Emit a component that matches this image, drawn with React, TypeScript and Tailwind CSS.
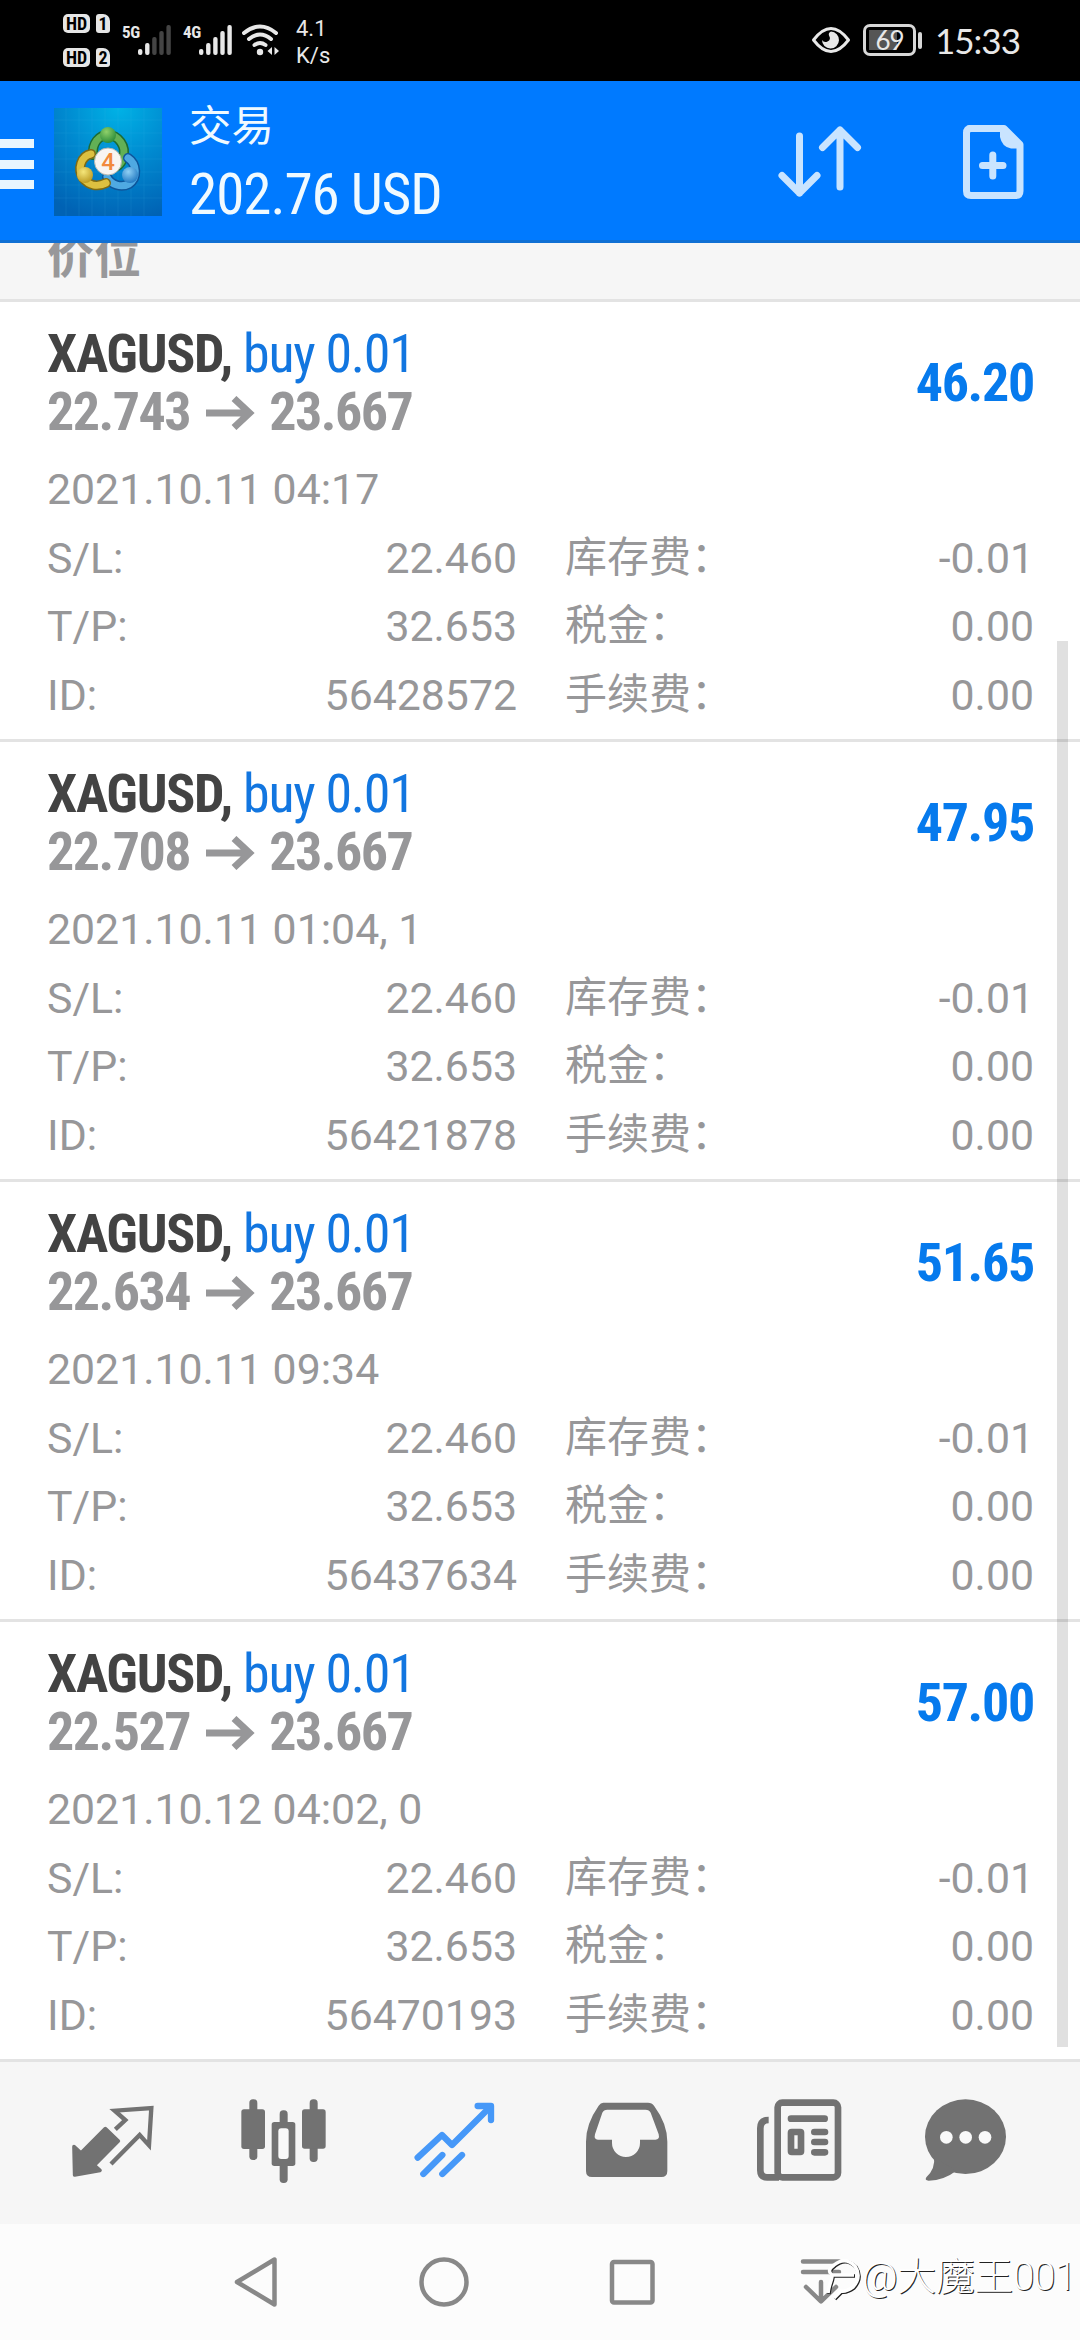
import React from 'react';

interface Position {
  id: string;
  symbol: string;
  side: string;
  open: string;
  current: string;
  profit: string;
  time: string;
  sl: string;
  tp: string;
  swap: string;
}

const positions: Position[] = [
  { id: '56428572', symbol: 'XAGUSD', side: 'buy 0.01', open: '22.743', current: '23.667', profit: '46.20', time: '2021.10.11 04:17', sl: '22.460', tp: '32.653', swap: '-0.01' },
  { id: '56421878', symbol: 'XAGUSD', side: 'buy 0.01', open: '22.708', current: '23.667', profit: '47.95', time: '2021.10.11 01:04, 1', sl: '22.460', tp: '32.653', swap: '-0.01' },
  { id: '56437634', symbol: 'XAGUSD', side: 'buy 0.01', open: '22.634', current: '23.667', profit: '51.65', time: '2021.10.11 09:34', sl: '22.460', tp: '32.653', swap: '-0.01' },
  { id: '56470193', symbol: 'XAGUSD', side: 'buy 0.01', open: '22.527', current: '23.667', profit: '57.00', time: '2021.10.12 04:02, 0', sl: '22.460', tp: '32.653', swap: '-0.01' },
];

function SimBadge({ slot }: { slot: string }) {
  return (
    <div className="flex gap-[6px] h-[19px] text-black font-bold text-[18px] leading-[20px] [font-stretch:75%]">
      <span className="w-[27px] rounded-[5px] bg-[#e6e6e6] text-center">HD</span>
      <span className="w-[14px] rounded-[3px] rounded-tr-[7px] bg-[#e6e6e6] text-center">{slot}</span>
    </div>
  );
}

function Signal({ label, level }: { label: string; level: number }) {
  return (
    <div className="flex items-end h-[30px]">
      <span className="self-start w-[16px] text-[17px] leading-[14px] font-bold tracking-[-0.3px] [font-stretch:75%]">{label}</span>
      <svg width="34" height="30" viewBox="0 0 34 30">
        {[6, 12, 18, 24, 30].map((h, i) => (
          <rect key={h} x={i * 7.1} y={30 - h} width="4.4" height={h} rx="2" fill={i < level ? '#e8e8e8' : '#444'} />
        ))}
      </svg>
    </div>
  );
}

function StatusBar() {
  return (
    <div className="h-[81px] bg-black text-[#e8e8e8] flex items-start">
      <div className="flex flex-col gap-[15px] pl-[63px] pt-[14px]">
        <SimBadge slot="1" />
        <SimBadge slot="2" />
      </div>
      <div className="pl-[12px] pt-[25px]">
        <Signal label="5G" level={2} />
      </div>
      <div className="pl-[11px] pt-[25px]">
        <Signal label="4G" level={5} />
      </div>
      <svg className="ml-[9px] mt-[24px]" width="38" height="32" viewBox="0 0 38 32" fill="none" stroke="#e8e8e8" strokeWidth="4" strokeLinecap="round">
        <path d="M2 9Q18 -4 34 9" />
        <path d="M7 15Q18 6 29 15" />
        <path d="M12.500 21Q18 17 23.500 21" />
        <circle cx="18" cy="28" r="3.200" fill="#e8e8e8" stroke="none" />
        <path d="M30 23V31L25.500 27ZM32.500 23V31L37 27Z" fill="#e8e8e8" stroke="none" />
      </svg>
      <div className="ml-[16px] pt-[15px] text-[22px] leading-[27px]">
        <div>4.1</div>
        <div>K/s</div>
      </div>
      <div className="ml-auto flex items-center pt-[21px] pr-[61px]">
        <svg width="40" height="28" viewBox="0 0 40 28">
          <path d="M2.500 14Q20 -9 37.500 14Q20 37 2.500 14Z" fill="none" stroke="#e8e8e8" strokeWidth="3" strokeLinejoin="round" />
          <path d="M20 5.500A8.500 8.500 0 1 1 11 14Q13 17 16.500 15.500Q20.500 13.500 18 9.500Q17 7 20 5.500Z" fill="#e8e8e8" />
        </svg>
        <div className="ml-[12px] w-[53px] h-[32px] rounded-[7px] border-[3px] border-[#d8d8d8] p-[3px]">
          <div className="w-[41px] h-[20px] bg-[linear-gradient(90deg,#555_68%,#000_68%)] text-center font-[Lato] text-[26px] leading-[20px] tracking-[-1px]">69</div>
        </div>
        <div className="ml-[2px] w-[4px] h-[17px] rounded-[2px] bg-[#d8d8d8]" />
        <div className="ml-[13px] w-[84px] font-[Lato] text-[35px] leading-[38px] tracking-[-1px]">15:33</div>
      </div>
    </div>
  );
}

function AppLogo() {
  return (
    <svg width="108" height="108" viewBox="0 0 108 108">
      <defs>
        <radialGradient id="sky" cx="60%" cy="0%" r="105%">
          <stop offset="0" stopColor="#00b2e6" />
          <stop offset="0.5" stopColor="#0088cf" />
          <stop offset="1" stopColor="#0062b4" />
        </radialGradient>
        <radialGradient id="green" cx="40%" cy="30%" r="80%">
          <stop offset="0" stopColor="#8fd06a" />
          <stop offset="1" stopColor="#1f8434" />
        </radialGradient>
        <radialGradient id="yellow" cx="40%" cy="30%" r="80%">
          <stop offset="0" stopColor="#f5e67a" />
          <stop offset="1" stopColor="#b59218" />
        </radialGradient>
        <radialGradient id="blue" cx="40%" cy="30%" r="80%">
          <stop offset="0" stopColor="#8fd0f5" />
          <stop offset="1" stopColor="#1670bd" />
        </radialGradient>
      </defs>
      <rect width="108" height="108" fill="url(#sky)" />
      <path d="M12 0V108M25 0V108M38 0V108M51 0V108M64 0V108M77 0V108M90 0V108M0 12H108M0 25H108M0 38H108M0 51H108M0 64H108M0 77H108M0 90H108" stroke="#3fb4ec" strokeOpacity="0.12" />
      <g fill="none" strokeLinecap="round">
        <path d="M39 47C38 35 45 27 54 27C64 27 73 38 69 50C67 57 62 60 58 59" stroke="#1c6b33" strokeWidth="10" />
        <path d="M39 47C38 35 45 27 54 27C64 27 73 38 69 50C67 57 62 60 58 59" stroke="#62b055" strokeWidth="7" />
        <path d="M53 69C57 77 67 80 75 76C84 70 83 56 74 50" stroke="#0d559b" strokeWidth="10" />
        <path d="M53 69C57 77 67 80 75 76C84 70 83 56 74 50" stroke="#4fa9e2" strokeWidth="7" />
        <path d="M37 46C27 48 23 61 29 70C35 78 44 79 52 75" stroke="#7d6a14" strokeWidth="10" />
        <path d="M37 46C27 48 23 61 29 70C35 78 44 79 52 75" stroke="#dcc040" strokeWidth="7" />
      </g>
      <circle cx="54" cy="27" r="8" fill="url(#green)" />
      <circle cx="31" cy="67" r="8" fill="url(#yellow)" />
      <circle cx="76" cy="67" r="8" fill="url(#blue)" />
      <circle cx="54" cy="53.500" r="13.500" fill="#f8f5f2" stroke="#b9b9b0" />
      <text x="54" y="62" textAnchor="middle" fontFamily="Roboto" fontSize="24" fontWeight="500" fill="#f28a3c">4</text>
    </svg>
  );
}

function Header() {
  return (
    <div className="h-[162px] bg-[#007aff] shadow-[inset_0_-3px_0_#1070d4] flex items-center">
      <div className="mt-[4px] w-[34px] h-[50px] flex flex-col justify-between">
        <div className="h-[9px] bg-[#e8f6ff]" />
        <div className="h-[9px] bg-[#e8f6ff]" />
        <div className="h-[9px] bg-[#e8f6ff]" />
      </div>
      <div className="ml-[20px]">
        <AppLogo />
      </div>
      <div className="ml-[27px] pt-[4px] text-[#f0faff]">
        <div className="text-[42.5px] leading-[62px]">交易</div>
        <div className="text-[57px] leading-[74px] tracking-[-1px] [font-stretch:75%]">202.76 USD</div>
      </div>
      <svg className="ml-auto" width="90" height="80" viewBox="0 0 90 80" fill="none" stroke="#c9e4ff" strokeWidth="7" strokeLinecap="round" strokeLinejoin="round">
        <path d="M25.500 14V71M8 53.500L25.500 71L43 53.500" />
        <path d="M66 65V8M48.500 25.500L66 8L83.500 25.500" />
      </svg>
      <svg className="ml-[97px] mr-[49px] mt-[2px]" width="70" height="80" viewBox="0 0 70 80" fill="none" stroke="#c9e4ff" strokeWidth="7" strokeLinecap="round" strokeLinejoin="round">
        <path d="M8 5.500H43L59 21.500V68Q59 72.500 54.500 72.500H10Q5.500 72.500 5.500 68V10Q5.500 5.500 10 5.500Z" />
        <path d="M39 5V14Q41 24 50 25.500H60V20L43 4Z" fill="#c9e4ff" stroke="none" />
        <path d="M21.500 42.500H42M31.800 32V53" />
      </svg>
    </div>
  );
}

function Field({ label, value }: { label: string; value: string }) {
  return (
    <div className="flex justify-between">
      <span>{label}</span>
      <span>{value}</span>
    </div>
  );
}

function FeeField({ label, value }: { label: string; value: string }) {
  return (
    <div className="flex justify-between">
      <span className="text-[42px] pl-px">{label}</span>
      <span>{value}</span>
    </div>
  );
}

function PositionRow({ position }: { position: Position }) {
  return (
    <div className="h-[440px] bg-white border-b-[3px] border-[#e3e3e3] pt-[23px] pl-[47px] pr-[46px] text-[#979799]">
      <div className="flex items-center justify-between text-[54px] leading-[58px] font-bold tracking-[-1.3px] [font-stretch:75%]">
        <div>
          <div className="text-[#434343]">
            {position.symbol}, <span className="font-normal text-[#1276e0]">{position.side}</span>
          </div>
          <div className="flex items-center tracking-[-1.5px]">
            {position.open}
            <svg className="ml-[16px] mr-[14px] mt-[2px]" width="49" height="34" viewBox="0 0 49 34" fill="none" stroke="#979799" strokeWidth="7">
              <path d="M0 17H44M28 2.500L43.500 17L28 31.500" />
            </svg>
            {position.current}
          </div>
        </div>
        <div className="text-[#067aed]">{position.profit}</div>
      </div>
      <div className="mt-[14px] text-[42.8px] leading-[68.5px]">
        <div>{position.time}</div>
        <div className="grid grid-cols-2 gap-x-[47px]">
          <Field label="S/L:" value={position.sl} />
          <FeeField label="库存费：" value={position.swap} />
          <Field label="T/P:" value={position.tp} />
          <FeeField label="税金：" value="0.00" />
          <Field label="ID:" value={position.id} />
          <FeeField label="手续费：" value="0.00" />
        </div>
      </div>
    </div>
  );
}

function QuotesIcon() {
  return (
    <svg width="96" height="96" viewBox="0 0 288 288" fill="none" stroke="#727272" strokeLinejoin="round">
      <path d="M27 155L48 174L121 101L160 138L88 211L105 226L29 240Z" fill="#727272" strokeWidth="11" />
      <path d="M151 103L181 75L149 47L259 39L252 151L224 120L138 207" strokeWidth="13" strokeLinejoin="miter" />
    </svg>
  );
}

function ChartIcon() {
  return (
    <svg width="96" height="96" viewBox="0 0 288 288" fill="#727272">
      <rect x="40" y="13" width="24" height="182" rx="11" />
      <rect x="16" y="43" width="71" height="119" rx="8" />
      <rect x="221" y="13" width="24" height="188" rx="11" />
      <rect x="198" y="43" width="71" height="118" rx="8" />
      <rect x="131" y="46" width="24" height="218" rx="11" />
      <rect x="107" y="81" width="71" height="132" rx="8" />
      <rect x="127" y="100" width="31" height="92" rx="9" fill="#f9f9f9" />
    </svg>
  );
}

function TradeIcon() {
  return (
    <svg width="96" height="96" viewBox="0 0 288 288" fill="none" stroke="#4698f8" strokeWidth="19" strokeLinecap="round" strokeLinejoin="round">
      <path d="M32 188L105 120L135 150L250 35" />
      <path d="M212 33H252V75" />
      <path d="M49 237L106 180M106 237L165 180" />
    </svg>
  );
}

function HistoryIcon() {
  return (
    <svg width="96" height="96" viewBox="0 0 288 288" fill="#727272">
      <path fillRule="evenodd" d="M76 23H210Q222 23 228 32Q268 86 268 140V228Q268 246 250 246H42Q24 246 24 228V140Q24 86 62 32Q68 23 76 23ZM88 44Q77 44 73 53L51 118Q47 134 60 134H102V144A42 42 0 0 0 186 144V134H232Q246 134 242 118L218 53Q214 44 202 44Z" />
    </svg>
  );
}

function NewsIcon() {
  return (
    <svg width="96" height="96" viewBox="0 0 288 288" fill="none" stroke="#727272" strokeWidth="20" strokeLinecap="round">
      <rect x="86" y="23" width="181" height="224" rx="14" />
      <path d="M59 75Q34 75 34 100V226Q34 247 54 247H90" strokeLinecap="butt" />
      <path d="M126 71H227M196 111H228M196 141H228M196 172H228" />
      <rect x="126" y="111" width="30" height="60" rx="2" />
    </svg>
  );
}

function MessagesIcon() {
  return (
    <svg width="96" height="96" viewBox="0 0 288 288" fill="#727272">
      <ellipse cx="136.500" cy="125" rx="121.500" ry="112" />
      <path d="M42 185Q47 220 19 247Q13 257 26 257Q72 256 108 228Z" />
      <g fill="#f9f9f9">
        <circle cx="79" cy="127" r="19" />
        <circle cx="137" cy="127" r="19" />
        <circle cx="195" cy="127" r="19" />
      </g>
    </svg>
  );
}

const tabs = [QuotesIcon, ChartIcon, TradeIcon, HistoryIcon, NewsIcon, MessagesIcon];

function TabBar() {
  return (
    <div className="h-[162px] bg-[#f6f6f6] px-[27px] grid grid-cols-6 place-items-center">
      {tabs.map((Icon, i) => (
        <Icon key={i} />
      ))}
    </div>
  );
}

function SystemNav() {
  return (
    <div className="h-[116px] bg-[#fcfcfc] pl-[162px] pr-[166px] grid grid-cols-4 place-items-center">
      <svg width="50" height="50" viewBox="0 0 50 50" fill="none" stroke="#888" strokeWidth="4.500" strokeLinejoin="round">
        <path d="M43.500 2.500V47.500L6 25Z" />
      </svg>
      <svg width="50" height="50" viewBox="0 0 50 50" fill="none" stroke="#888" strokeWidth="4.500">
        <circle cx="25" cy="25" r="22.500" />
      </svg>
      <svg width="50" height="50" viewBox="0 0 50 50" fill="none" stroke="#888" strokeWidth="4.500">
        <rect x="5" y="5" width="40.500" height="40.500" rx="2" />
      </svg>
      <svg width="50" height="50" viewBox="0 0 50 50" fill="none" stroke="#888" strokeWidth="4.500" strokeLinecap="round" strokeLinejoin="round">
        <path d="M8 4.500H44M8 15H44M26 25V44M11 30L26 44.500L41 30" />
      </svg>
    </div>
  );
}

function Watermark() {
  return (
    <div className="absolute left-[826px] bottom-[37px] flex items-center text-white">
      <svg className="mt-[6px] drop-shadow-[1px_1px_0_#222]" width="36" height="46" viewBox="0 0 36 46" fill="none" stroke="#fff" strokeWidth="3.500">
        <path d="M2 36C3 26 8 20 5 17Q1 13 8 8Q19 -1 29 9Q36 20 27 30Q20 35 15 34L8 41" />
        <path d="M6 18H28" />
      </svg>
      <span className="text-[39px] leading-[48px] font-light tracking-[-0.5px] [text-shadow:1px_1px_0_#222] whitespace-nowrap">@大魔王001</span>
    </div>
  );
}

export default function App() {
  return (
    <div className="relative w-[1080px] h-[2340px] overflow-hidden bg-white font-[Roboto,'Noto_Sans_CJK_SC',sans-serif]">
      <StatusBar />
      <Header />

      {/* Section title, scrolled half way under the header */}
      <div className="h-[59px] overflow-hidden bg-[#f6f6f6] border-b-[3px] border-[#e3e3e3] px-[47px] flex items-end">
        <div className="text-[47px] leading-[60px] pb-[12px] font-bold text-[#98989a]">价位</div>
      </div>

      {positions.map((position) => (
        <PositionRow key={position.id} position={position} />
      ))}

      <TabBar />
      <SystemNav />

      {/* Scrollbar */}
      <div className="absolute left-[1057px] top-[641px] w-[11px] h-[1406px] bg-black/12" />
      <Watermark />
    </div>
  );
}
